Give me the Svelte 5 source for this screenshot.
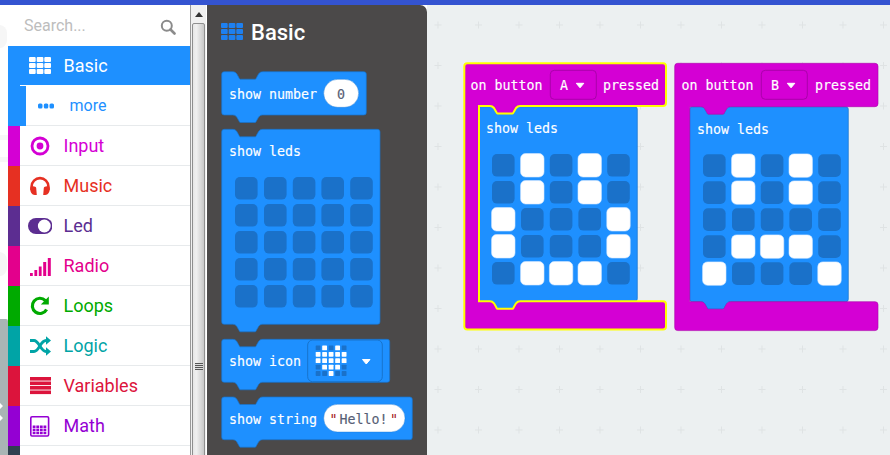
<script>
  const rows = [
    { label: 'Input', color: '#d400d4', icon: 'input' },
    { label: 'Music', color: '#e63022', icon: 'music' },
    { label: 'Led', color: '#5c2d91', icon: 'led' },
    { label: 'Radio', color: '#e3008c', icon: 'radio' },
    { label: 'Loops', color: '#00aa00', icon: 'loops' },
    { label: 'Logic', color: '#00a4a6', icon: 'logic' },
    { label: 'Variables', color: '#dc143c', icon: 'variables' },
    { label: 'Math', color: '#9400d3', icon: 'math' },
    { label: '', color: '#2f4050', icon: '' }
  ];

  const notchDown = 'c2 0 3 .8 4 2l2 3.500c.5 .9 .8 2 1.500 2h15c.7 0 1 -1.100 1.500 -2l2 -3.500c1 -1.200 2 -2 4 -2';
  const notchBack = 'c-2 0 -3 .8 -4 2l-2 3.500c-.5 .9 -.8 2 -1.500 2h-15c-.7 0 -1 -1.100 -1.500 -2l-2 -3.500c-1 -1.200 -2 -2 -4 -2';
  const tabFwd = notchDown;
  const tabBack = notchBack;

  function stmt(x, y, w, h) {
    const r = 2.5;
    return `M${x} ${y + r}q0 ${-r} ${r} ${-r}H${x + 11}${notchDown}H${x + w - r}q${r} 0 ${r} ${r}V${y + h - r}q0 ${r} ${-r} ${r}H${x + 41}${tabBack}H${x + r}q${-r} 0 ${-r} ${-r}Z`;
  }

  function hat(x, y, w, headBottom, inner, innerBottom, bottom) {
    const r = 3;
    return `M${x} ${y + r}q0 ${-r} ${r} ${-r}H${x + w - r}q${r} 0 ${r} ${r}V${headBottom - r}q0 ${r} ${-r} ${r}H${inner + 41}${notchBack}H${inner}V${innerBottom}H${inner + 11}${tabFwd}H${x + w - r}q${r} 0 ${r} ${r}V${bottom - r}q0 ${r} ${-r} ${r}H${x + r}q${-r} 0 ${-r} ${-r}Z`;
  }

  const dim5 = Array.from({ length: 5 }, (_, i) => i);
  const colX = [0, 29, 57.8, 86.4, 115.2];
  const rowY = [0, 27, 54, 81, 108];

  const blank = ['00000', '00000', '00000', '00000', '00000'];
  const patA = ['01010', '01010', '10001', '10001', '01110'];
  const patB = ['01010', '01010', '00000', '01110', '10001'];
  const heart = ['01010', '11111', '11111', '01110', '00100'];

  // plus marks of the workspace grid, with the page as coordinate system
  const plusX = Array.from({ length: 12 }, (_, i) => 438 + 40.5 * i);
  const plusY = Array.from({ length: 11 }, (_, i) => 25 + 40.5 * i);
</script>

{#snippet caret(x, y)}
  <path class="caret" d="M{x} {y}h7.500l-3.750 4.500z" />
{/snippet}

{#snippet leds(x, y, pat)}
  {#each dim5 as r}
    {#each dim5 as c}
      {#if pat[r][c] === '1'}
        <rect class="led-on" x={x + colX[c] - 0.4} y={y + rowY[r] - 0.4} width="23.4" height="23.4" rx="5" />
      {:else}
        <rect class="led-off" x={x + colX[c]} y={y + rowY[r]} width="22.6" height="22.6" rx="5" />
      {/if}
    {/each}
  {/each}
{/snippet}

{#snippet icon(name)}
  <svg class="ico" viewBox="0 0 24 24" width="24" height="24" aria-hidden="true">
    {#if name === 'input'}
      <circle cx="12" cy="12" r="8" fill="none" stroke="currentColor" stroke-width="2.8" />
      <circle cx="12" cy="12" r="3.4" fill="currentColor" />
    {:else if name === 'music'}
      <path d="M3.600 16v-3.500a8.400 8.400 0 0 1 16.800 0V16" fill="none" stroke="currentColor" stroke-width="2.600" />
      <path d="M2.200 14.500c0-1.500 1-2.300 2.800-2.300 1.600 0 3.200.8 3.200 1.800l.6 7h-2c-3 0-4.600-3-4.600-6.500zM21.800 14.500c0-1.500-1-2.300-2.800-2.300-1.600 0-3.200.8-3.200 1.800l-.6 7h2c3 0 4.600-3 4.600-6.500z" fill="currentColor" />
    {:else if name === 'led'}
      <rect x="0" y="4" width="24.500" height="16" rx="8" fill="currentColor" />
      <circle cx="16.300" cy="12" r="6.400" fill="#fff" />
    {:else if name === 'radio'}
      <g fill="currentColor">
        <rect x="2" y="19" width="2.800" height="3" />
        <rect x="6.400" y="16" width="2.800" height="6" />
        <rect x="10.800" y="12.500" width="2.800" height="9.500" />
        <rect x="15.200" y="8" width="3" height="14" />
        <rect x="19.800" y="4" width="3" height="18" />
      </g>
    {:else if name === 'loops'}
      <path d="M18.600 15.500A7.600 7.600 0 1 1 17.400 6.600" fill="none" stroke="currentColor" stroke-width="3.200" />
      <path d="M20.800 2.600v8h-8z" fill="currentColor" />
    {:else if name === 'logic'}
      <g fill="none" stroke="currentColor" stroke-width="2.800">
        <path d="M2 6.500h4c5 0 6.500 11 12 11h1" />
        <path d="M2 17.500h4c5 0 6.500-11 12-11h1" />
      </g>
      <path d="M18 2.200l5 4.300-5 4.300zM18 13.200l5 4.300-5 4.300z" fill="currentColor" />
    {:else if name === 'variables'}
      <g fill="currentColor">
        <rect x="2" y="3" width="21" height="3.600" />
        <rect x="2" y="7.500" width="21" height="3.600" />
        <rect x="2" y="12" width="21" height="3.600" />
        <rect x="2" y="16.500" width="21" height="3.600" />
      </g>
    {:else if name === 'math'}
      <rect x="2.800" y="2.800" width="17.800" height="19.200" rx="1.200" fill="none" stroke="currentColor" stroke-width="1.600" />
      <g fill="currentColor">
        {#each [11.500, 14.600, 17.700] as yy}
          {#each [4.700, 8.300, 11.900, 15.500] as xx}
            <rect x={xx} y={yy} width="2.800" height="2.500" />
          {/each}
        {/each}
      </g>
    {/if}
  </svg>
{/snippet}

{#snippet grid(cls)}
  <svg class={cls} viewBox="0 0 22 17" width="22" height="17" aria-hidden="true">
    {#each [0, 6, 12] as yy}
      {#each [0, 7.700, 15.300] as xx}
        <rect x={xx} y={yy} width="6.700" height="5" rx="1" />
      {/each}
    {/each}
  </svg>
{/snippet}

<div class="page">
  <div class="topbar"></div>
  <div class="main">
    <svg class="rail" viewBox="0 5 8 450" width="8" height="450" aria-hidden="true">
      <rect x="-8" y="25" width="15" height="23" rx="8" fill="#f6f6f6" />
      <rect x="0" y="135" width="8" height="5" fill="#f7f7f7" />
      <rect x="0" y="157" width="8" height="5" fill="#f7f7f7" />
      <rect x="-8" y="252" width="15" height="24" rx="8" fill="#f6f6f6" />
      <path d="M0 319h6q2 0 2 2v134H0z" fill="#a9b5b5" />
      <path d="M0 403l3 3-3 3zM0 415l3 3-3 3z" fill="#fff" />
    </svg>

    <nav class="sidebar">
      <div class="search">
        <span class="placeholder">Search...</span>
        <svg class="mag" viewBox="0 0 16 16" width="16" height="16" aria-hidden="true">
          <circle cx="6.800" cy="6.800" r="5" fill="none" stroke="#8b8b8b" stroke-width="2" />
          <path d="M10.500 10.500l4 4" stroke="#8b8b8b" stroke-width="2.600" stroke-linecap="round" />
        </svg>
      </div>

      <div class="row selected">
        <span class="stripe"></span>
        <div class="cell">
          <span class="ico-box">{@render grid('grid-white')}</span>
          <span class="label">Basic</span>
        </div>
      </div>

      <div class="row more">
        <span class="stripe"></span>
        <div class="cell">
          <span class="ico-box">
            <svg viewBox="0 0 24 24" width="24" height="24" aria-hidden="true">
              <rect x="4" y="9.500" width="4.500" height="5" rx="1.500" />
              <rect x="9.800" y="9.500" width="4.500" height="5" rx="1.500" />
              <rect x="15.500" y="9.500" width="4.500" height="5" rx="1.500" />
            </svg>
          </span>
          <span class="label">more</span>
        </div>
      </div>

      {#each rows as row}
        <div class="row" style="color: {row.color}">
          <span class="stripe"></span>
          <div class="cell">
            <span class="ico-box">{@render icon(row.icon)}</span>
            {#if row.label}<span class="label">{row.label}</span>{/if}
          </div>
        </div>
      {/each}
    </nav>

    <div class="scrollbar">
      <div class="arrow"></div>
      <div class="thumb"><span class="grip"></span></div>
    </div>

    <section class="flyout">
      <header class="fly-head">
        {@render grid('grid-blue')}
        <h2>Basic</h2>
      </header>
      <svg class="fly-blocks" viewBox="207 60 220 395" width="220" height="395">
        <path class="blue" d={stmt(221.7, 71.7, 144.6, 43.3)} />
        <text class="bt" x="229" y="99">show number</text>
        <rect class="pill" x="323.700" y="79.300" width="35" height="28" rx="14" />
        <text class="dark" x="341" y="99" text-anchor="middle">0</text>

        <path class="blue" d={stmt(221.7, 129.3, 158.3, 195)} />
        <text class="bt" x="229" y="156">show leds</text>
        {@render leds(235, 177, blank)}

        <path class="blue" d={stmt(221.7, 339.3, 168, 43)} />
        <text class="bt" x="229" y="366">show icon</text>
        <rect class="field" x="307.700" y="340" width="74.600" height="41.700" rx="5" />
        {#each dim5 as r}
          {#each dim5 as c}
            <rect x={315.7 + c * 6.5} y={345.5 + r * 6.4} width="4.800" height="4.800" rx=".6" fill={heart[r][c] === '1' ? '#fff' : '#1a71c9'} />
          {/each}
        {/each}
        {@render caret(362.5, 359.500)}

        <path class="blue" d={stmt(221.7, 397, 190.6, 42.7)} />
        <text class="bt" x="229" y="424.300">show string</text>
        <rect class="pill" x="323.700" y="404.300" width="81.300" height="27.700" rx="13.800" />
        <text class="quote" x="329.500" y="424.300">"</text>
        <text class="dark" x="339.500" y="424.300">Hello!</text>
        <text class="quote" x="390" y="424.300">"</text>
      </svg>
    </section>

    <svg class="canvas" viewBox="427 5 463 450" width="463" height="450">
      <g class="plus">
        {#each plusY as py}
          {#each plusX as px}
            <path d="M{px - 3.500} {py}h7M{px} {py - 3.500}v7" />
          {/each}
        {/each}
      </g>

      <path class="blue flat" d={stmt(479, 106.7, 158.3, 194.6)} />
      <path class="hat selected-hat" d={hat(464.3, 63.3, 201.7, 106, 479, 301.3, 329.6)} />
      <text class="bt" x="470.500" y="90">on button</text>
      <rect class="drop" x="550.300" y="70.300" width="46" height="29" rx="4" />
      <text class="bt" x="560" y="90">A</text>
      {@render caret(576.300, 83.300)}
      <text class="bt" x="603" y="90">pressed</text>
      <text class="bt" x="486" y="133">show leds</text>
      {@render leds(492, 154, patA)}

      <path class="blue flat" d={stmt(689.7, 106.7, 158.6, 195)} />
      <path class="hat" d={hat(674.7, 63.3, 203.3, 106.7, 689.7, 301.7, 330.6)} />
      <text class="bt" x="681.500" y="90">on button</text>
      <rect class="drop" x="761.300" y="70.300" width="46" height="29" rx="4" />
      <text class="bt" x="771" y="90">B</text>
      {@render caret(787.300, 83.300)}
      <text class="bt" x="815" y="90">pressed</text>
      <text class="bt" x="697" y="134">show leds</text>
      {@render leds(703, 154.300, patB)}
    </svg>
  </div>
</div>

<style>
  :global(body) {
    margin: 0;
    background: #fff;
    overflow: hidden;
  }
  .page {
    width: 890px;
    height: 455px;
    display: flex;
    flex-direction: column;
    overflow: hidden;
    font-family: Roboto, "Liberation Sans", sans-serif;
  }
  .topbar {
    height: 5px;
    flex: none;
    background: #3454d1;
  }
  .main {
    flex: 1;
    min-height: 0;
    display: flex;
    overflow: hidden;
  }
  .rail {
    flex: none;
    display: block;
  }
  .sidebar {
    flex: none;
    width: 182px;
    background: #fff;
    border-right: 1px solid #9a9a9a;
    box-sizing: content-box;
  }
  .search {
    height: 41px;
    display: flex;
    align-items: center;
    justify-content: space-between;
    padding: 0 14px 0 16px;
  }
  .placeholder {
    font-size: 16px;
    color: #bdbdbd;
  }
  .mag {
    display: block;
    margin-top: 2px;
  }
  .row {
    height: 40px;
    display: flex;
  }
  .stripe {
    flex: none;
    width: 12px;
    background: currentColor;
  }
  .cell {
    flex: 1;
    display: flex;
    align-items: center;
    padding-left: 8px;
    border-bottom: 1px solid #e7eaec;
    font-size: 18px;
  }
  .ico-box {
    width: 24px;
    height: 24px;
    margin-right: 11.500px;
    display: flex;
    align-items: center;
    justify-content: center;
    flex: none;
  }
  .ico {
    display: block;
  }
  .selected {
    color: #1e90ff;
    background: #1e90ff;
  }
  .selected .cell {
    color: #fff;
    border-bottom-color: #fff;
  }
  .more {
    color: #1e90ff;
  }
  .more .stripe {
    width: 18px;
  }
  .more .cell {
    font-size: 16px;
  }
  .more svg {
    display: block;
    fill: #1e90ff;
  }
  .grid-white {
    fill: #fff;
    display: block;
  }
  .grid-blue {
    fill: #1e80f0;
    display: block;
  }
  .scrollbar {
    flex: none;
    width: 15px;
    background: #f0f0f0;
    display: flex;
    flex-direction: column;
    align-items: center;
  }
  .arrow {
    flex: none;
    width: 0;
    height: 0;
    margin: 7px 0 6px;
    border-left: 4px solid transparent;
    border-right: 4px solid transparent;
    border-bottom: 5px solid #333;
  }
  .thumb {
    flex: none;
    width: 13px;
    height: 686px;
    box-sizing: border-box;
    border: 1px solid #8f8f8f;
    border-radius: 2px;
    background: linear-gradient(90deg, #e6e6e6 0%, #f0f0f0 30%, #c8c8c8 100%);
    display: flex;
    align-items: center;
    justify-content: center;
  }
  .grip {
    width: 8px;
    height: 7px;
    background: repeating-linear-gradient(180deg, #555 0, #555 1px, #ddd 1px, #ddd 2px);
  }
  .flyout {
    flex: none;
    width: 220px;
    margin-left: 1px;
    background: #4b4949;
    border-top-right-radius: 7px;
    overflow: hidden;
  }
  .fly-head {
    height: 55px;
    box-sizing: border-box;
    display: flex;
    align-items: center;
    gap: 8px;
    padding: 0 0 2px 14px;
  }
  h2 {
    margin: 2px 0 0;
    color: #fff;
    font-size: 22px;
    font-weight: 500;
    line-height: 1;
  }
  .fly-blocks {
    display: block;
  }
  .canvas {
    flex: none;
    display: block;
    background: #ecf0f1;
  }
  .plus {
    stroke: #dfe3e4;
    stroke-width: 1;
    fill: none;
  }
  .blue {
    fill: #1e90ff;
    stroke: #1873cc;
    stroke-width: 1;
    stroke-opacity: .7;
  }
  .flat {
    stroke: #1873cc;
  }
  .hat {
    fill: #d400d4;
    stroke: #aa00aa;
    stroke-width: 1;
    stroke-opacity: .6;
  }
  .selected-hat {
    stroke: #ffff00;
    stroke-width: 2;
    stroke-opacity: 1;
  }
  text {
    font-family: "DejaVu Sans Mono", "Liberation Mono", monospace;
    font-size: 13.300px;
  }
  .bt {
    fill: #fff;
    stroke: #fff;
    stroke-width: .15;
  }
  .dark {
    fill: #575e75;
    stroke: #575e75;
    stroke-width: .15;
  }
  .quote {
    fill: #a31515;
  }
  .pill {
    fill: #fff;
    stroke: #1873cc;
    stroke-opacity: .4;
  }
  .field {
    fill: #1e90ff;
    stroke: #1873cc;
  }
  .drop {
    fill: #d400d4;
    stroke: #aa00aa;
  }
  .caret {
    fill: #fff;
    stroke: #fff;
    stroke-width: 1;
    stroke-linejoin: round;
  }
  .led-off {
    fill: #1a71c9;
  }
  .led-on {
    fill: #fff;
    stroke: #d6e9ff;
    stroke-width: .6;
  }
</style>
